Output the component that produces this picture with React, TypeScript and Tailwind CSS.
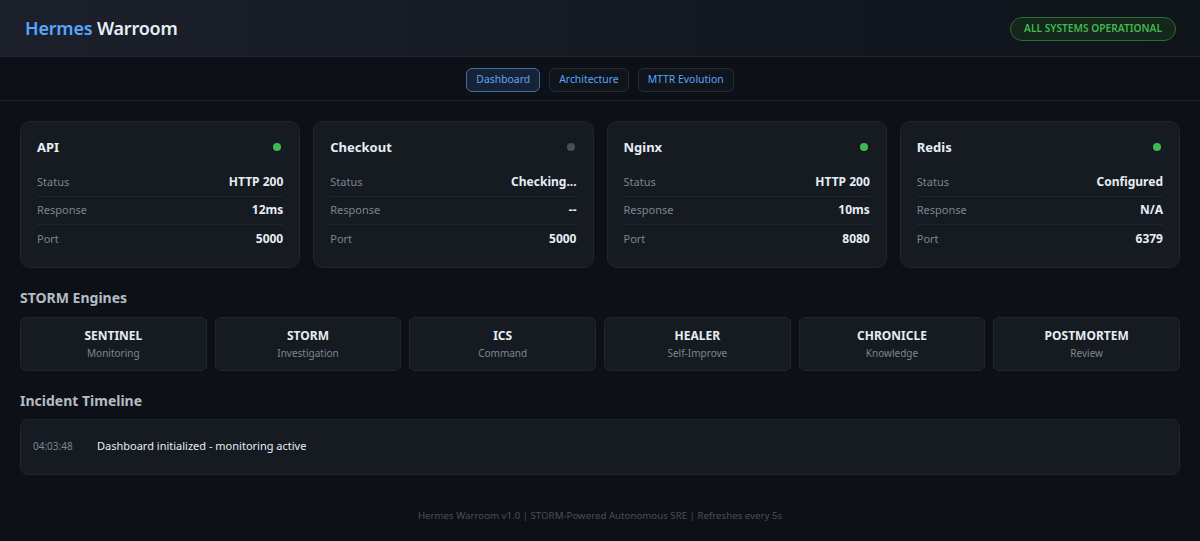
import React from 'react';

const SERVICES = [
  { name: 'API', dot: 'bg-[#3fb950]', status: 'HTTP 200', response: '12ms', port: '5000' },
  { name: 'Checkout', dot: 'bg-[#484f58]', status: 'Checking...', response: '--', port: '5000' },
  { name: 'Nginx', dot: 'bg-[#3fb950]', status: 'HTTP 200', response: '10ms', port: '8080' },
  { name: 'Redis', dot: 'bg-[#3fb950]', status: 'Configured', response: 'N/A', port: '6379' },
];

const ENGINES = [
  { name: 'SENTINEL', role: 'Monitoring' },
  { name: 'STORM', role: 'Investigation' },
  { name: 'ICS', role: 'Command' },
  { name: 'HEALER', role: 'Self-Improve' },
  { name: 'CHRONICLE', role: 'Knowledge' },
  { name: 'POSTMORTEM', role: 'Review' },
];

const TABS = ['Dashboard', 'Architecture', 'MTTR Evolution'];

function ServiceCard({ s }: { s: (typeof SERVICES)[number] }) {
  const rows = [
    ['Status', s.status],
    ['Response', s.response],
    ['Port', s.port],
  ];
  return (
    <div className="rounded-[10px] border border-[#21262d] bg-[#161b22] px-4 pt-[17px] pb-[13px]">
      <div className="mb-[11px] flex h-[18px] items-center justify-between">
        <span className="text-[13px] font-bold text-[#e6edf3]">{s.name}</span>
        <span className={`mr-[2px] -mt-[2px] h-2 w-2 rounded-full ${s.dot}`} />
      </div>
      {rows.map(([label, value], i) => (
        <div
          key={label}
          className={`flex h-[28.5px] items-center justify-between ${
            i < rows.length - 1 ? 'border-b border-[#21262d]' : ''
          }`}
        >
          <span className="text-[11px] text-[#7d8590]">{label}</span>
          <span className="text-[12px] font-bold text-[#e6edf3]">{value}</span>
        </div>
      ))}
    </div>
  );
}

export default function App() {
  return (
    <div
      className="min-h-[541px] bg-[#0d1117] text-[#e6edf3]"
      style={{ fontFamily: '"Segoe UI", "Noto Sans", "Open Sans", sans-serif' }}
    >
      {/* Header */}
      <header className="flex h-[57px] items-center justify-between border-b border-[#21262d] bg-gradient-to-r from-[#1b202b] to-[#0f131a] pl-[25px] pr-6">
        <h1 className="text-[18px] font-semibold tracking-[-0.2px]">
          <span className="text-[#58a6ff]">Hermes</span>{' '}
          <span className="text-[#e6edf3]">Warroom</span>
        </h1>
        <span className="mt-[2px] rounded-full border border-[#2f6b35] bg-[#15261b] px-[13px] py-[3px] text-[10.2px] font-semibold text-[#3fb950]">
          ALL SYSTEMS OPERATIONAL
        </span>
      </header>

      {/* Tabs */}
      <nav className="flex h-[44px] items-center justify-center gap-[9px] border-b border-[#21262d] bg-[#0d1117]">
        {TABS.map((t, i) => (
          <button
            key={t}
            className={`mt-[2px] h-[24px] rounded-md border px-[9px] text-[10.4px] text-[#58a6ff] ${
              i === 0 ? 'border-[#3b6ea8] bg-[#172334]' : 'border-[#262c35] bg-[#10141b]'
            }`}
          >
            {t}
          </button>
        ))}
      </nav>

      {/* Main */}
      <main className="px-5 pt-5">
        <div className="grid grid-cols-4 gap-[13px]">
          {SERVICES.map((s) => (
            <ServiceCard key={s.name} s={s} />
          ))}
        </div>

        <h2 className="mt-5 mb-[9px] h-5 text-[14px] leading-5 font-bold text-[#b4bcc5]">STORM Engines</h2>
        <div className="grid grid-cols-6 gap-2">
          {ENGINES.map((e) => (
            <div
              key={e.name}
              className="flex h-[54px] flex-col items-center justify-center rounded-md border border-[#21262d] bg-[#161b22]"
            >
              <span className="text-[12px] font-bold text-[#e6edf3]">{e.name}</span>
              <span className="mt-[1px] text-[10px] text-[#7d8590]">{e.role}</span>
            </div>
          ))}
        </div>

        <h2 className="mt-5 mb-[8px] h-5 text-[14px] leading-5 font-bold text-[#b4bcc5]">Incident Timeline</h2>
        <div className="flex h-[56px] items-center rounded-lg border border-[#21262d] bg-[#161b22] px-[12px]">
          <span className="w-[64px] text-[10px] text-[#7d8590]">04:03:48</span>
          <span className="text-[11px] text-[#e6edf3]">Dashboard initialized - monitoring active</span>
        </div>

        <footer className="pt-[34px] text-center text-[9.7px] text-[#484f58]">
          Hermes Warroom v1.0 | STORM-Powered Autonomous SRE | Refreshes every 5s
        </footer>
      </main>
    </div>
  );
}
